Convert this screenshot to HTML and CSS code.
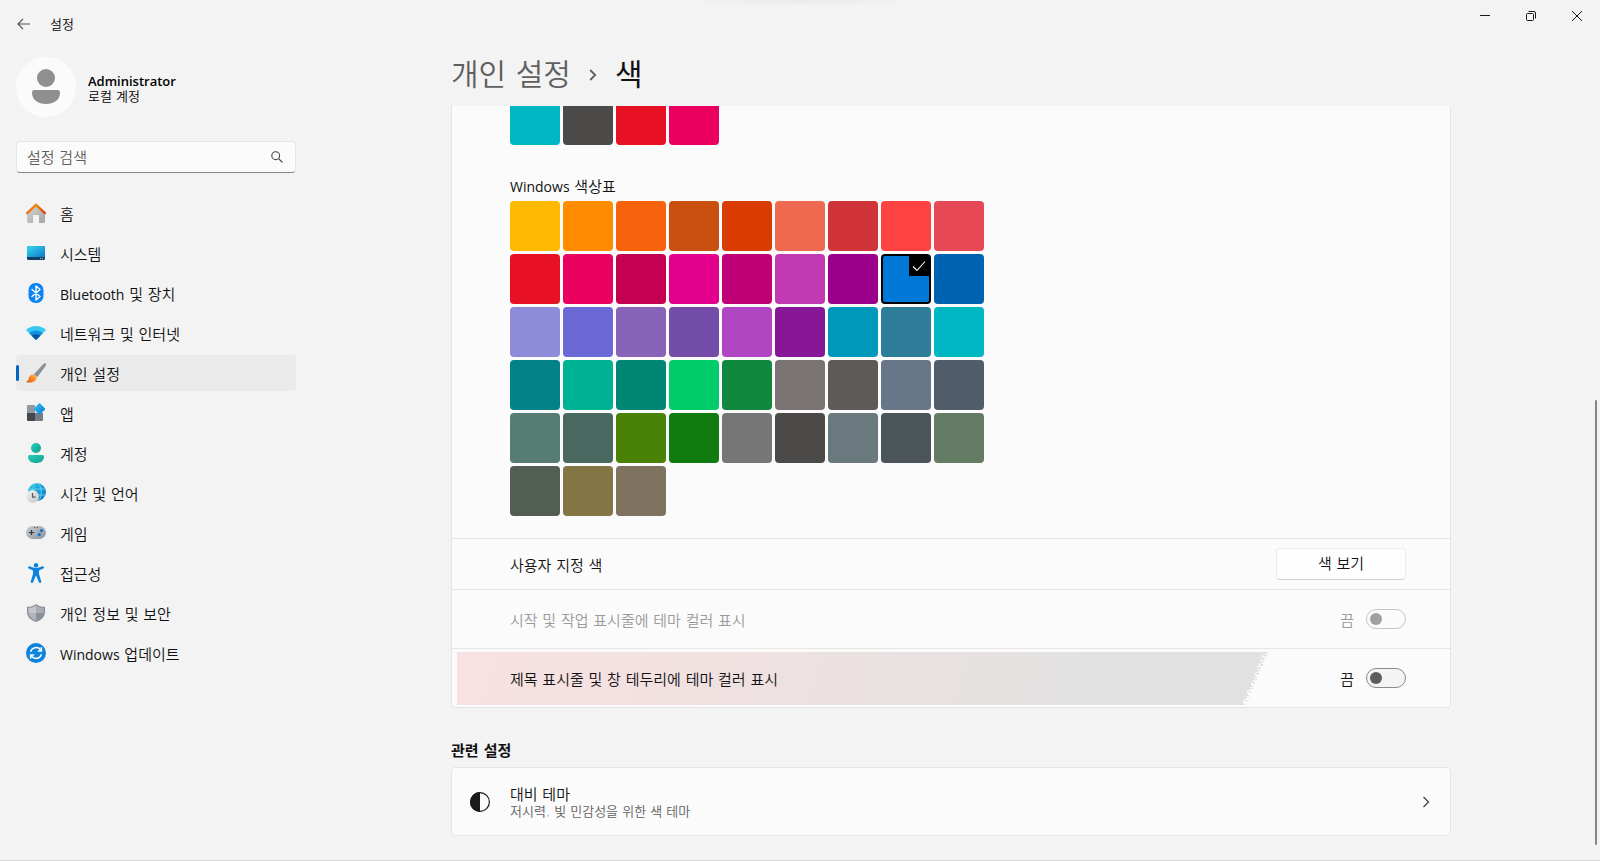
FILE: index.html
```html
<!DOCTYPE html>
<html lang="ko">
<head>
<meta charset="utf-8">
<meta name="viewport" content="width=device-width, initial-scale=1">
<title>설정</title>
<link rel="stylesheet" href="styles.css">
</head>
<body>
<div class="window">
  <header class="titlebar">
    <button class="back" type="button" aria-label="뒤로">
      <svg width="14" height="12" viewBox="0 0 14 12" fill="none" stroke="#555" stroke-width="1.1"><path d="M13 6H1.2M6 1L1 6l5 5"/></svg>
    </button>
    <span class="app-name">설정</span>
    <div class="caption">
      <button type="button" aria-label="최소화"><svg width="12" height="12" viewBox="0 0 12 12" fill="none" stroke="#1a1a1a"><path d="M1 5.500h10"/></svg></button>
      <button type="button" aria-label="이전 크기로 복원"><svg width="12" height="12" viewBox="0 0 12 12" fill="none" stroke="#1a1a1a"><rect x="1.500" y="3.500" width="7" height="7" rx="1"/><path d="M3.500 1.500H9a1.500 1.500 0 0 1 1.500 1.500v5.500"/></svg></button>
      <button type="button" aria-label="닫기"><svg width="12" height="12" viewBox="0 0 12 12" fill="none" stroke="#1a1a1a"><path d="M1 1l10 10M11 1L1 11"/></svg></button>
    </div>
  </header>

  <div class="body">
    <aside class="sidebar">
      <div class="account">
        <svg class="avatar" width="60" height="60" viewBox="0 0 60 60"><circle cx="30" cy="30" r="30" fill="#fbfbfb"/><circle cx="30" cy="21" r="9" fill="#8f8f8f"/><path d="M18.500 33h23a2.500 2.500 0 0 1 2.500 2.500C44 43 38 47 30 47s-14-4-14-11.500a2.500 2.500 0 0 1 2.500-2.500z" fill="#8f8f8f"/></svg>
        <div class="account-text">
          <strong class="latin">Administrator</strong>
          <span>로컬 계정</span>
        </div>
      </div>

      <label class="search">
        <input type="text" placeholder="설정 검색" aria-label="설정 검색">
        <svg width="12" height="12" viewBox="0 0 12 12" fill="none" stroke="#444" stroke-width="1.100"><circle cx="4.700" cy="4.700" r="3.900"/><path d="M7.600 7.600l3.800 3.800" stroke-width="1.300"/></svg>
      </label>

      <nav class="nav">
        <a href="#home"><svg viewBox="0 0 20 20"><defs><linearGradient id="g1" x2="1" y2="1"><stop stop-color="#d8d8d8"/><stop offset="1" stop-color="#a4a4a4"/></linearGradient><linearGradient id="g2" x2="1"><stop stop-color="#e8720e"/><stop offset=".5" stop-color="#f08a13"/><stop offset="1" stop-color="#cf4510"/></linearGradient></defs><path d="M1 9l9-8 9 8v9.500a1.500 1.500 0 0 1-1.500 1.500H13v-8H7v8H2.500A1.500 1.500 0 0 1 1 18.500z" fill="url(#g1)"/><path d="M1.200 10.200L10 1.800l8.800 8.400" fill="none" stroke="url(#g2)" stroke-width="2.400" stroke-linecap="round" stroke-linejoin="round"/></svg><span>홈</span></a>
        <a href="#system"><svg viewBox="0 0 20 20"><defs><linearGradient id="g3" x2="1" y2="1"><stop stop-color="#35dbe8"/><stop offset="1" stop-color="#0f77cc"/></linearGradient></defs><rect x="1" y="3" width="18" height="14" rx="1.500" fill="#0d4064"/><path d="M1 14V4.500A1.500 1.500 0 0 1 2.500 3h15A1.500 1.500 0 0 1 19 4.500V14z" fill="url(#g3)"/><path d="M14 15h1v1h-1zM16 15h1v1h-1z" fill="#a9d7ea"/></svg><span>시스템</span></a>
        <a href="#devices"><svg viewBox="0 0 20 20"><rect x="2.500" width="15" height="20" rx="7" fill="#0a84f5"/><path d="M6 6.500l8 7-4 3.500V3l4 3.500-8 7" fill="none" stroke="#fff" stroke-width="1.400" stroke-linejoin="round" stroke-linecap="round"/></svg><span><span class="latin">Bluetooth</span> 및 장치</span></a>
        <a href="#network"><svg viewBox="0 0 20 20"><path d="M10 17L0 7c5.500-5.300 14.500-5.300 20 0z" fill="#38c9f3"/><path d="M10 17L3.200 10.200c3.800-3.500 9.800-3.500 13.600 0z" fill="#1292e0"/><path d="M10 17l-4.300-4.300c2.500-2 6.100-2 8.600 0z" fill="#0b559d"/></svg><span>네트워크 및 인터넷</span></a>
        <a href="#personalization" class="current" aria-current="page"><svg viewBox="0 0 20 20"><defs><linearGradient id="g4" x2="1" y2="1"><stop stop-color="#b4bac0"/><stop offset="1" stop-color="#626b74"/></linearGradient><linearGradient id="g5" x1="1" x2="0" y2="1"><stop stop-color="#ffc046"/><stop offset=".5" stop-color="#fb8421"/><stop offset="1" stop-color="#d75514"/></linearGradient></defs><path d="M19.600.500c.7.700.5 1.700-.1 2.600L11.300 14 7.600 11.500 17 1.200c.8-.9 1.800-1.400 2.600-.7z" fill="url(#g4)"/><path d="M7.600 11.500l3 2.600c.6 4-3.600 6-10 5.400-.4-.5-.2-1 .3-1.200 2-.9 1.300-2.600 2.400-4.600.9-1.700 2.700-2.400 4.300-2.200z" fill="url(#g5)"/></svg><span>개인 설정</span></a>
        <a href="#apps"><svg viewBox="0 0 20 20"><defs><linearGradient id="g6" x2="1" y2="1"><stop stop-color="#37c8f4"/><stop offset="1" stop-color="#0b72d0"/></linearGradient></defs><path d="M2 2h7v8H1V3a1 1 0 0 1 1-1z" fill="#9299a2"/><path d="M1 10h8v8H2a1 1 0 0 1-1-1z" fill="#42474c"/><path d="M9 10h8v7a1 1 0 0 1-1 1H9z" fill="#747b84"/><path d="M12.800.600a1 1 0 0 1 1.400 0l4.600 4.700a1 1 0 0 1 0 1.400l-4.600 4.600a1 1 0 0 1-1.400 0L8.200 6.700a1 1 0 0 1 0-1.400z" fill="url(#g6)"/></svg><span>앱</span></a>
        <a href="#accounts"><svg viewBox="0 0 20 20"><defs><linearGradient id="g7" x2="1" y2="1"><stop stop-color="#24cfbd"/><stop offset="1" stop-color="#12a08c"/></linearGradient></defs><circle cx="10" cy="5" r="5" fill="url(#g7)"/><path d="M3.500 12h13a1.500 1.500 0 0 1 1.500 1.500c0 4.500-3.500 6.500-8 6.500s-8-2-8-6.500A1.500 1.500 0 0 1 3.500 12z" fill="url(#g7)"/></svg><span>계정</span></a>
        <a href="#time"><svg viewBox="0 0 20 20"><defs><linearGradient id="g8" x2="1" y2="1"><stop stop-color="#33cce8"/><stop offset="1" stop-color="#0870c5"/></linearGradient><linearGradient id="g10" x2="1" y2="1"><stop stop-color="#f5f5f5"/><stop offset="1" stop-color="#c4c4c4"/></linearGradient></defs><circle cx="11" cy="9" r="9" fill="url(#g8)"/><g fill="none" stroke="#6adcf2" stroke-width=".8"><ellipse cx="11" cy="9" rx="4.300" ry="8.800"/><path d="M3 6h16M3 12h16"/></g><circle cx="6.500" cy="13.500" r="6.500" fill="url(#g10)"/><path d="M6.500 10v4.200h3" fill="none" stroke="#555" stroke-width="1.200"/></svg><span>시간 및 언어</span></a>
        <a href="#gaming"><svg viewBox="0 0 20 20"><defs><linearGradient id="g9" x2="1" y2="1"><stop stop-color="#c8cdd2"/><stop offset="1" stop-color="#8b939b"/></linearGradient></defs><rect y="3" width="20" height="13" rx="6.500" fill="url(#g9)"/><path d="M5.500 7v5M3 9.500h5" stroke="#30363b" stroke-width="1.200"/><circle cx="15.500" cy="7.600" r="1.600" fill="#0a76cf"/><circle cx="13.300" cy="11.600" r="1.600" fill="#0a76cf"/><path d="M8.200 4h1v1h-1zM10.800 4h1v1h-1z" fill="#444"/></svg><span>게임</span></a>
        <a href="#accessibility"><svg viewBox="0 0 20 20"><g fill="#0c83dc"><circle cx="10" cy="2.200" r="2.200"/><path d="M2.100 4.100c.3-.8 1-1.100 1.700-.8C8 5.400 12 5.400 16.200 3.300c.7-.3 1.400 0 1.700.8.200.7-.1 1.200-.7 1.500L13 7.500V11l2.200 7.300c.2.800-.1 1.400-.8 1.600s-1.300-.1-1.600-.8L10.300 13h-.6l-2.500 6.100c-.3.700-.9 1-1.600.8s-1-.8-.8-1.600L7 11V7.500L2.800 5.600c-.6-.3-.9-.8-.7-1.500z"/></g></svg><span>접근성</span></a>
        <a href="#privacy"><svg viewBox="0 0 20 20"><path d="M10 1c2.500 2 5.500 2.800 9 2.800V9c0 5-4 8.500-9 10-5-1.500-9-5-9-10V3.800C4.500 3.800 7.500 3 10 1z" fill="#8b9197"/><path d="M10 2.500c2 1.500 4.500 2.300 7.600 2.500V10H10z" fill="#a9aeb5"/><path d="M10 2.500C8 4 5.500 4.800 2.400 5V10H10z" fill="#c3c7cc"/><path d="M2.400 10H10v7.500C6 16 2.800 13.500 2.400 10z" fill="#b0b5bb"/><path d="M10 10h7.600c-.4 3.500-3.600 6-7.600 7.500z" fill="#8b9198"/></svg><span>개인 정보 및 보안</span></a>
        <a href="#update"><svg viewBox="0 0 20 20"><circle cx="10" cy="10" r="10" fill="#0c83dc"/><g fill="none" stroke="#fff" stroke-width="1.500"><path d="M4.600 8.800a5.600 5.600 0 0 1 10.300-1.300M15.400 11.200a5.600 5.600 0 0 1-10.300 1.300"/><path d="M15.400 4.300v3.600h-3.600M4.600 15.700v-3.600h3.600"/></g></svg><span><span class="latin">Windows</span> 업데이트</span></a>
      </nav>
    </aside>

    <main class="main">
      <h1 class="crumbs">
        <a href="#personalization">개인 설정</a>
        <svg width="8" height="12" viewBox="0 0 8 12" fill="none" stroke="#5f5f5f" stroke-width="1.800"><path d="M1.200 1L6.200 6l-5 5"/></svg>
        <span>색</span>
      </h1>

      <div class="scroll">
        <section class="card colors">
          <div class="palettes">
            <div class="swatches recent">
              <button type="button" aria-label="청록" style="background:#00b7c3"></button>
              <button type="button" aria-label="진회색" style="background:#4c4a48"></button>
              <button type="button" aria-label="빨강" style="background:#e81123"></button>
              <button type="button" aria-label="장미" style="background:#ea005e"></button>
            </div>
            <h2 class="palette-title"><span class="latin">Windows</span> 색상표</h2>
            <div class="swatches">
              <button type="button" style="background:#ffb900"></button>
              <button type="button" style="background:#ff8c00"></button>
              <button type="button" style="background:#f7630c"></button>
              <button type="button" style="background:#ca5010"></button>
              <button type="button" style="background:#da3b01"></button>
              <button type="button" style="background:#ef6950"></button>
              <button type="button" style="background:#d13438"></button>
              <button type="button" style="background:#ff4343"></button>
              <button type="button" style="background:#e74856"></button>
              <button type="button" style="background:#e81123"></button>
              <button type="button" style="background:#ea005e"></button>
              <button type="button" style="background:#c30052"></button>
              <button type="button" style="background:#e3008c"></button>
              <button type="button" style="background:#bf0077"></button>
              <button type="button" style="background:#c239b3"></button>
              <button type="button" style="background:#9a0089"></button>
              <button type="button" class="chosen" aria-pressed="true" style="background:#0078d7"><svg width="20" height="20" viewBox="0 0 20 20"><path d="M0 0h20v20H0z"/><path d="M4 10.500l4 4 8-9" fill="none" stroke="#fff" stroke-width="1.100"/></svg></button>
              <button type="button" style="background:#0063b1"></button>
              <button type="button" style="background:#8e8cd8"></button>
              <button type="button" style="background:#6b69d6"></button>
              <button type="button" style="background:#8764b8"></button>
              <button type="button" style="background:#744da9"></button>
              <button type="button" style="background:#b146c2"></button>
              <button type="button" style="background:#881798"></button>
              <button type="button" style="background:#0099bc"></button>
              <button type="button" style="background:#2d7d9a"></button>
              <button type="button" style="background:#00b7c3"></button>
              <button type="button" style="background:#038387"></button>
              <button type="button" style="background:#00b294"></button>
              <button type="button" style="background:#018574"></button>
              <button type="button" style="background:#00cc6a"></button>
              <button type="button" style="background:#10893e"></button>
              <button type="button" style="background:#7a7574"></button>
              <button type="button" style="background:#5d5a58"></button>
              <button type="button" style="background:#68768a"></button>
              <button type="button" style="background:#515c6b"></button>
              <button type="button" style="background:#567c73"></button>
              <button type="button" style="background:#486860"></button>
              <button type="button" style="background:#498205"></button>
              <button type="button" style="background:#107c10"></button>
              <button type="button" style="background:#767676"></button>
              <button type="button" style="background:#4c4a48"></button>
              <button type="button" style="background:#69797e"></button>
              <button type="button" style="background:#4a5459"></button>
              <button type="button" style="background:#647c64"></button>
              <button type="button" style="background:#525e54"></button>
              <button type="button" style="background:#847545"></button>
              <button type="button" style="background:#7e735f"></button>
            </div>
          </div>
          <div class="row compact">
            <span class="row-label">사용자 지정 색</span>
            <button class="button" type="button">색 보기</button>
          </div>
          <div class="row disabled">
            <label class="row-label" for="taskbar-accent">시작 및 작업 표시줄에 테마 컬러 표시</label>
            <span class="state">끔</span>
            <input class="toggle" id="taskbar-accent" type="checkbox" role="switch" disabled>
          </div>
          <div class="row marked">
            <svg class="marker" viewBox="0 0 812 54" preserveAspectRatio="none" shape-rendering="crispEdges" aria-hidden="true"><defs><linearGradient id="mk" gradientUnits="userSpaceOnUse" x1="0" y1="0" x2="620" y2="160"><stop offset="0" stop-color="#f8e1e1"/><stop offset=".3" stop-color="#f3e1e1"/><stop offset="1" stop-color="#e1e1e1"/></linearGradient></defs><path fill="url(#mk)" d="M0 0h811l-2 4-3 5 1 2-4 5 1 2-4 7 1 1-4 7-1 4-3 4 1 2-4 6-2 5H0z"/><g stroke="#e1e1e1" fill="none"><path d="M812 0L789 54" stroke-width="2" stroke-dasharray="2 1 1 2 3 1"/><path d="M814 0L791 54" stroke-width="2" stroke-dasharray="1 2 2 3 1 1"/></g></svg>
            <label class="row-label" for="title-accent">제목 표시줄 및 창 테두리에 테마 컬러 표시</label>
            <span class="state">끔</span>
            <input class="toggle" id="title-accent" type="checkbox" role="switch">
          </div>
        </section>

        <h2 class="section-title">관련 설정</h2>
        <a class="card link-card" href="#contrast">
          <svg width="20" height="20" viewBox="0 0 20 20"><circle cx="10" cy="10" r="9.400" fill="none" stroke="#1a1a1a" stroke-width="1.200"/><path d="M10 0a10 10 0 0 0 0 20z" fill="#1a1a1a"/></svg>
          <span class="link-text"><span>대비 테마</span><small>저시력, 빛 민감성을 위한 색 테마</small></span>
          <svg width="8" height="12" viewBox="0 0 8 12" fill="none" stroke="#444" stroke-width="1.300"><path d="M1.500 1L6.500 6l-5 5"/></svg>
        </a>
      </div>
      <div class="scrollbar"></div>
    </main>
  </div>
</div>
</body>
</html>
```
FILE: styles.css
```css
* { box-sizing: border-box; }

body {
  margin: 0;
  background: #f3f3f3;
  color: #111;
  /* The first family supplies the word space, the second the Hangul. */
  font: 350 15px/20px "DejaVu Sans", "Noto Sans CJK KR", sans-serif;
}

button, input { font: inherit; color: inherit; }
a { color: inherit; text-decoration: none; }
h1, h2 { margin: 0; font-weight: 350; }

.latin { font-family: "Open Sans", sans-serif; font-size: 14px; font-weight: 400; }

.window {
  display: flex;
  flex-direction: column;
  height: 100vh;
  overflow: hidden;
  border-bottom: 1px solid #d6d6d6;
}

.titlebar {
  display: flex;
  align-items: center;
  height: 48px;
  flex: none;
  /* Soft shade at the middle of the top edge. */
  background: radial-gradient(ellipse 120px 6px at 50% 0, #e9e9e9, #f3f3f3);
}
.titlebar button {
  display: grid;
  place-items: center;
  border: 0;
  padding: 0;
  background: none;
}
.back { width: 48px; height: 48px; }
.app-name { padding: 2px 0 0 2px; font-size: 13px; color: #000; }
.caption { display: flex; align-self: flex-start; margin-left: auto; }
.caption button { width: 46px; height: 32px; }

.body { display: flex; flex: 1; min-height: 0; }

.sidebar { flex: none; width: 302px; padding: 9px 6px 0 16px; }

.account { display: flex; align-items: center; gap: 12px; }
.avatar { flex: none; }
.account-text {
  display: flex;
  flex-direction: column;
  padding-top: 4px;
  font-size: 13px;
  line-height: 16px;
  color: #000;
}
.account-text .latin { font-size: 13px; font-weight: 600; }

.search {
  display: flex;
  align-items: center;
  height: 32px;
  margin-top: 24px;
  padding: 0 12px 0 10px;
  background: #fbfbfb;
  border: 1px solid #e5e5e5;
  border-bottom-color: #868686;
  border-radius: 4px;
}
.search input {
  flex: 1;
  min-width: 0;
  padding: 1px 0 0;
  border: 0;
  outline: 0;
  background: none;
}
.search input::placeholder { color: #5f5f5f; opacity: 1; }

.nav { display: grid; gap: 4px; margin-top: 22px; }
.nav a {
  display: flex;
  align-items: center;
  gap: 14px;
  height: 36px;
  padding: 0 10px;
  border-radius: 4px;
}
.nav a > span { padding-top: 3px; }
.nav svg { width: 20px; height: 20px; flex: none; }
.nav .current {
  position: relative;
  background: #eaeaea;
}
.nav .current::before {
  content: "";
  position: absolute;
  left: 0;
  top: 10px;
  width: 3px;
  height: 16px;
  border-radius: 2px;
  background: #0067c0;
}

.main {
  position: relative;
  display: flex;
  flex: 1;
  flex-direction: column;
  align-items: center;
  min-width: 0;
}
.main > .crumbs, .scroll { width: 100%; max-width: 1000px; }

.crumbs {
  display: flex;
  align-items: center;
  gap: 18px;
  height: 58px;
  padding-bottom: 5px;
  font-size: 30px;
  line-height: 40px;
}
.crumbs a { color: #5f5f5f; }
.crumbs span { font-weight: 400; }

.scroll { flex: 1; min-height: 0; overflow: hidden; }

.card {
  background: #fbfbfb;
  border: 1px solid #e5e5e5;
  border-radius: 4px;
}
.colors { border-top: 0; border-radius: 0 0 4px 4px; overflow: hidden; }

.palettes { padding: 0 58px 22px; }
.swatches {
  display: grid;
  grid-template-columns: repeat(9, 50px);
  grid-auto-rows: 50px;
  gap: 3px;
}
.swatches button { border: 0; border-radius: 4px; padding: 0; }
.recent { margin-top: -11px; }
.palette-title { padding: 32px 0 4px; font-size: 15px; }
.swatches .chosen {
  display: flex;
  justify-content: flex-end;
  align-items: flex-start;
  overflow: hidden;
  border: 2px solid #000;
}
.chosen svg { display: block; flex: none; }

.row {
  position: relative;
  display: flex;
  align-items: center;
  min-height: 59px;
  padding: 0 44px 0 58px;
  border-top: 1px solid #e5e5e5;
}
.compact { min-height: 51px; }
.row-label { flex: 1; }
.row-label, .state { position: relative; padding-top: 3px; }
.disabled { color: #9a9a9a; }

.button {
  width: 130px;
  height: 32px;
  background: #fefefe;
  border: 1px solid #ececec;
  border-bottom-color: #d0d0d0;
  border-radius: 4px;
}

.toggle {
  appearance: none;
  display: flex;
  align-items: center;
  width: 40px;
  height: 20px;
  margin: 0 0 0 12px;
  padding: 0 3px;
  background: #f4f4f4;
  border: 1px solid #8a8a8a;
  border-radius: 10px;
}
.toggle::before {
  content: "";
  width: 12px;
  height: 12px;
  border-radius: 50%;
  background: #5d5d5d;
}
.toggle:disabled { background: #fbfbfb; border-color: #c5c5c5; }
.toggle:disabled::before { background: #a0a0a0; }

/* Highlighter stroke laid behind the row's label. */
.marker {
  position: absolute;
  left: 5px;
  top: 3px;
  width: 81%;
  height: 53px;
  overflow: visible;
}

.section-title {
  padding: 33px 0 6px;
  font-size: 15px;
  font-weight: 700;
}

.link-card {
  display: flex;
  align-items: center;
  min-height: 69px;
  padding: 0 20px 0 18px;
}
.link-text {
  display: flex;
  flex: 1;
  flex-direction: column;
  padding: 2px 0 0 20px;
  line-height: 18px;
}
.link-text small { font-size: 13px; line-height: 16px; color: #5f5f5f; }

.scrollbar {
  position: absolute;
  right: 3px;
  top: 352px;
  bottom: 15px;
  width: 2px;
  border-radius: 1px;
  background: #868686;
}
```
